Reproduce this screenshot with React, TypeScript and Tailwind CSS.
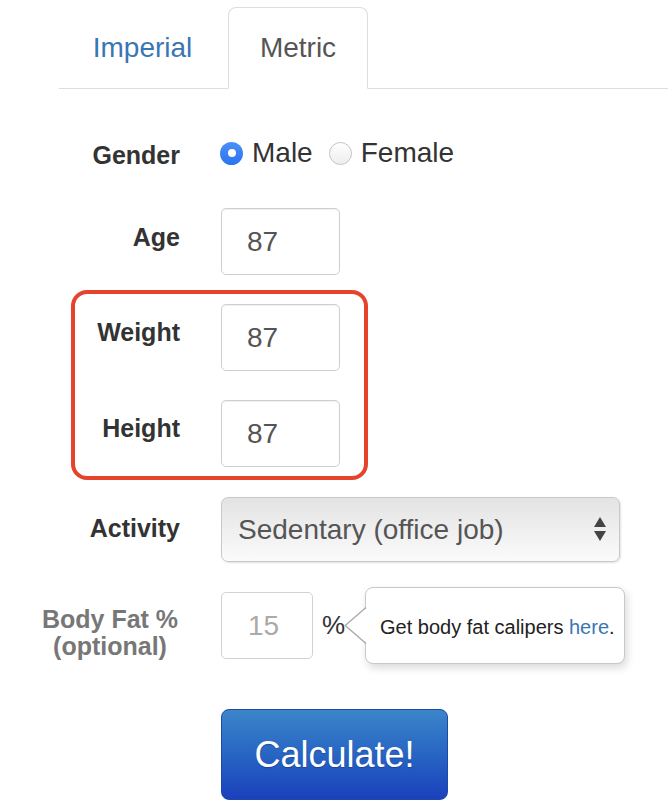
import React from "react";

function Label({ children, pt }: { children: React.ReactNode; pt: string }) {
  return (
    <div className={`w-[180px] shrink-0 text-right text-[25px] font-bold leading-[30px] text-[#333] ${pt}`}>
      {children}
    </div>
  );
}

function NumInput({ value }: { value: string }) {
  return (
    <div className="ml-[41px] flex h-[67px] w-[119px] items-center rounded-[5px] border border-[#cfcfcf] bg-white pl-[25px] text-[28px] text-[#555] shadow-[inset_0_1px_1px_rgba(0,0,0,0.06)]">
      {value}
    </div>
  );
}

export default function App() {
  return (
    <div
      className="relative h-[808px] w-[668px] overflow-hidden bg-white text-[#333]"
      style={{ fontFamily: '"Liberation Sans", Arial, sans-serif' }}
    >
      {/* Tabs */}
      <div className="pl-[59px] pt-[7px]">
        <div className="flex border-b border-[#dddddd]">
          <div className="flex h-[81px] w-[167px] items-center justify-center text-[28px] text-[#3a76b4]">
            Imperial
          </div>
          <div className="mb-[-1px] ml-[2px] flex h-[82px] w-[140px] items-center justify-center rounded-t-[8px] border border-[#dddddd] border-b-white bg-white text-[28px] text-[#555]">
            Metric
          </div>
        </div>
      </div>

      {/* Gender */}
      <div className="mt-[47px] flex h-[34px] items-start">
        <Label pt="pt-[4px]">Gender</Label>
        <div className="ml-[40px] flex h-[34px] items-center text-[28px] text-[#333]">
          <span className="flex h-[23px] w-[23px] items-center justify-center rounded-full bg-gradient-to-b from-[#4a90f7] to-[#2a74ee]">
            <span className="h-[8px] w-[8px] rounded-full bg-white" />
          </span>
          <span className="ml-[9px]">Male</span>
          <span className="ml-[16px] h-[23px] w-[23px] rounded-full border border-[#c4c4c4] bg-gradient-to-b from-white to-[#ededed]" />
          <span className="ml-[9px]">Female</span>
        </div>
      </div>

      {/* Age */}
      <div className="mt-[38px] flex items-start">
        <Label pt="pt-[14px]">Age</Label>
        <NumInput value="87" />
      </div>

      {/* Weight / Height highlighted */}
      <div className="relative mt-[29px]">
        <div className="flex items-start">
          <Label pt="pt-[13px]">Weight</Label>
          <NumInput value="87" />
        </div>
        <div className="mt-[29px] flex items-start">
          <Label pt="pt-[13px]">Height</Label>
          <NumInput value="87" />
        </div>
        <div className="pointer-events-none absolute left-[71px] top-[-14px] h-[190px] w-[297px] rounded-[16px] border-[4px] border-[#e6432c]" />
      </div>

      {/* Activity */}
      <div className="mt-[30px] flex items-start">
        <Label pt="pt-[16px]">Activity</Label>
        <div className="ml-[41px] flex h-[65px] w-[399px] items-center justify-between rounded-[7px] border border-[#c9c9c9] bg-gradient-to-b from-[#e3e3e3] to-[#fbfbfb] pl-[16px] pr-[13px] text-[28px] text-[#555] shadow-[1px_1px_2px_rgba(0,0,0,0.12)]">
          <span>Sedentary (office job)</span>
          <svg width="12" height="25" viewBox="0 0 12 25">
            <polygon points="6,0 12,10 0,10" fill="#444" />
            <polygon points="0,14 12,14 6,24" fill="#444" />
          </svg>
        </div>
      </div>

      {/* Body fat */}
      <div className="relative mt-[30px] flex items-start">
        <div className="w-[180px] shrink-0 pl-[40px] pt-[14px] text-center text-[25px] font-bold leading-[27px] text-[#777]">
          Body Fat %<br />(optional)
        </div>
        <div className="ml-[41px] flex h-[67px] w-[92px] items-center rounded-[5px] border border-[#d2d2d2] bg-white pl-[26px] text-[28px] text-[#aaa]">
          15
        </div>
        <div className="ml-[9px] flex h-[67px] items-center text-[26px] text-[#333]">%</div>

        {/* Tooltip */}
        <div className="absolute left-[344px] top-[-5px] flex h-[77px] items-center">
          <svg
            className="relative z-10 mr-[-3px] block h-[37px] w-[24px] max-w-none shrink-0"
            viewBox="0 0 24 37"
          >
            <polygon points="24,0 1,18.5 24,37" fill="#ffffff" />
            <polyline points="22,0.5 1.2,18.5 22,36.5" fill="none" stroke="#a8a8a8" strokeWidth="1.3" />
          </svg>
          <div className="flex h-[77px] w-[260px] items-center rounded-[8px] border border-[#c8c8c8] bg-white pl-[14px] pt-[3px] text-[20px] text-[#222] shadow-[2px_4px_8px_rgba(0,0,0,0.15)]">
            <span>
              Get body fat calipers <span className="text-[#3a76b4]">here</span>.
            </span>
          </div>
        </div>
      </div>

      {/* Button */}
      <div className="ml-[221px] mt-[49px]">
        <div className="flex h-[91px] w-[227px] items-center justify-center rounded-[8px] border border-[#1d4aa8] bg-gradient-to-b from-[#3c85c9] to-[#1c40bc] text-[36px] text-white [text-shadow:0_1px_1px_rgba(0,0,0,0.25)]">
          Calculate!
        </div>
      </div>
    </div>
  );
}
